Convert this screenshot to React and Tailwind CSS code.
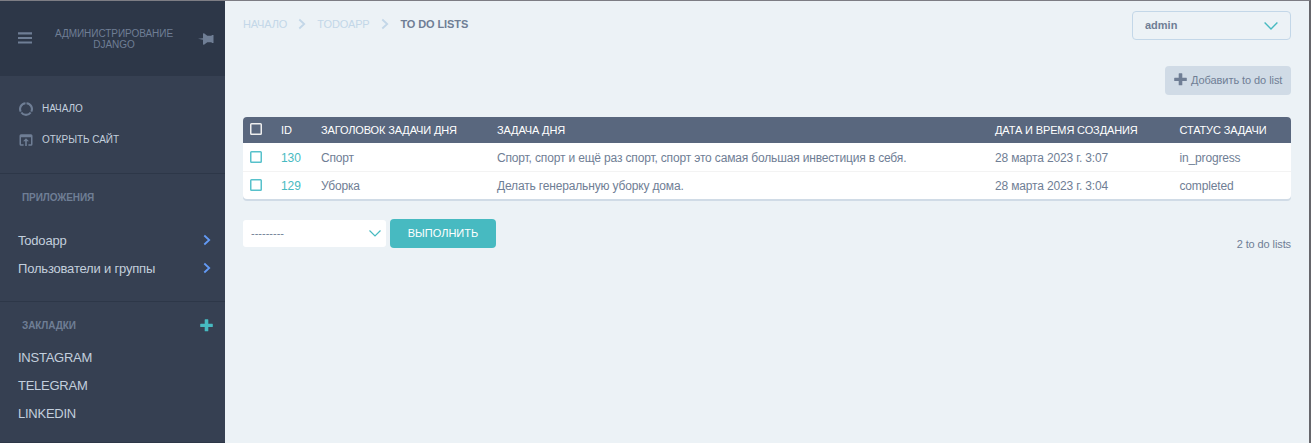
import React from "react";

const bookmarks = ["INSTAGRAM", "TELEGRAM", "LINKEDIN"];

function ChevronRight({ className }) {
  return (
    <svg viewBox="0 0 8 12" className={className} fill="none" stroke="currentColor" strokeWidth="1.8">
      <path d="M1.300 1.500 6.200 6 1.300 10.500" />
    </svg>
  );
}

function ChevronDown({ className }) {
  return (
    <svg viewBox="0 0 14 8" className={className} fill="none" stroke="currentColor" strokeWidth="1.4">
      <path d="M.6 .5 7 6.900 13.400 .5" />
    </svg>
  );
}

function Plus({ className }) {
  return (
    <svg viewBox="0 0 13 13" className={className} fill="currentColor">
      <path d="M4.700.8q0-.5.5-.5h2.600q.5 0 .5.5v3.900h4q.5 0 .5.5v2.200q0 .5-.5.5h-4v3.800q0 .5-.5.5H5.200q-.5 0-.5-.5V7.900H.7q-.5 0-.5-.5V5.200q0-.5.5-.5h4z" />
    </svg>
  );
}

function Checkbox({ className }) {
  return (
    <svg viewBox="0 0 12 12" className={"size-3 " + className} fill="none" stroke="currentColor" strokeWidth="1.5">
      <rect x=".75" y=".75" width="10.500" height="10.500" rx=".8" />
    </svg>
  );
}

function Sidebar() {
  return (
    <aside className="flex h-full w-[225px] shrink-0 flex-col bg-[#364052] text-[#c3cfdd]">
      <div className="flex h-[75px] shrink-0 items-center bg-[#2d3748] pl-[18px] text-[#6f7e95]">
        <svg viewBox="0 0 14 12" className="mb-0.5 h-3 w-3.5" fill="currentColor">
          <path d="M0 .3h14v2.100H0zM0 4.900h14v2.200H0zM0 9.500h14v2.100H0z" />
        </svg>
        <div className="ml-4 w-[132px] text-center text-[10px] leading-[11px] tracking-[-0.05px]">
          АДМИНИСТРИРОВАНИЕ
          <br />
          DJANGO
        </div>
        <svg viewBox="0 0 16 12" className="ml-[18px] mt-px h-3 w-4" fill="currentColor">
          <path d="M0 5.800 5 5.200V.9Q5 0 6 .3L9.300 2.800H13.200L14.200 2H15.500V10H14.200L13.200 9.200H9.300L6 11.700Q5 12 5 11.100V6.800z" />
        </svg>
      </div>
      <nav className="flex h-[98px] shrink-0 flex-col border-b border-[#2d3748] pt-[17px] text-[10px] tracking-[-0.05px]">
        <a className="flex h-[31px] items-center pl-[19px]">
          <svg viewBox="0 0 14 14" className="mr-[9px] size-3.5 text-[#6f7e95]" fill="none" stroke="currentColor" strokeWidth="2.1">
            <path d="M7.500 1.200A5.800 5.800 0 0 1 12.300 9.600M11.700 10.500A5.800 5.800 0 0 1 2.300 10.500M1.700 9.600A5.800 5.800 0 0 1 6.500 1.200" />
          </svg>
          <span>НАЧАЛО</span>
        </a>
        <a className="flex h-[31px] items-center pl-[19px]">
          <svg viewBox="0 0 14 14" className="mr-[9px] size-3.5 text-[#6f7e95]" fill="currentColor">
            <path d="M2 1.200h10q1.500 0 1.500 1.500v8.600q0 1.500-1.500 1.500H9.400v-1.500H12V4.200H2v7.100h2.600v1.500H2q-1.500 0-1.500-1.500V2.700Q.5 1.200 2 1.200zM7 5.200 10 8.300H7.800V12.900H6.200V8.300H4z" />
          </svg>
          <span>ОТКРЫТЬ САЙТ</span>
        </a>
      </nav>
      <section className="flex h-[128px] shrink-0 flex-col border-b border-[#2d3748] text-[13px]">
        <h2 className="mb-[5px] flex h-[47px] items-center pl-[22px] text-[10px] font-bold tracking-[-0.08px] text-[#6f7e95]">ПРИЛОЖЕНИЯ</h2>
        <a className="flex h-7 items-center justify-between pl-[18px] pr-3.5">
          <span className="pt-0.5 tracking-[-0.2px]">Todoapp</span>
          <ChevronRight className="h-3 w-2 text-[#639af5]" />
        </a>
        <a className="flex h-7 items-center justify-between pl-[18px] pr-3.5">
          <span className="pt-0.5 tracking-[-0.19px]">Пользователи и группы</span>
          <ChevronRight className="h-3 w-2 text-[#639af5]" />
        </a>
      </section>
      <section className="flex h-[141px] shrink-0 flex-col border-b border-[#2d3748] text-[13px]">
        <h2 className="flex h-[41px] items-center justify-between pl-[22px] pr-3 pt-[6px] text-[10px] font-bold tracking-[-0.08px] text-[#6f7e95]">
          <span>ЗАКЛАДКИ</span>
          <Plus className="size-[13px] text-[#47bac1]" />
        </h2>
        {bookmarks.map((name) => (
          <a key={name} className="flex h-7 items-center pl-[18px]">
            <span className="pt-0.5 tracking-[-0.25px]">{name}</span>
          </a>
        ))}
      </section>
    </aside>
  );
}

const columns = "grid grid-cols-[38px_40px_176px_498px_184.500px_1fr] items-center";

function Row({ id, title, task, date, status, className }) {
  return (
    <div className={columns + " text-[12px] tracking-[-0.16px] text-[#6f7e95] " + className}>
      <Checkbox className="ml-[7px] text-[#57c1cb]" />
      <span className="pt-px tracking-[-0.1px] text-[#47bac1]">{id}</span>
      <span className="pt-px">{title}</span>
      <span className="pt-px">{task}</span>
      <span className="pt-px">{date}</span>
      <span className="pt-px">{status}</span>
    </div>
  );
}

export default function App() {
  return (
    <div className="flex h-[443px] w-[1311px] overflow-hidden border-r-2 border-t border-r-[#66666b] border-t-[#7d7d84] bg-[#ecf2f6] font-['Liberation_Sans',Arial,sans-serif]">
      <Sidebar />
      <main className="flex w-[1066px] flex-col pl-[18px] text-[#6f7e95]">
        <header className="flex h-[39px] items-start justify-between pt-2.5">
          <div className="flex h-[26px] items-center text-[11px] text-[#c3d7e8]">
            <span className="tracking-[-0.15px]">НАЧАЛО</span>
            <ChevronRight className="ml-[11px] mr-[11px] h-3 w-2" />
            <span className="tracking-[-0.2px]">TODOAPP</span>
            <ChevronRight className="ml-[12px] mr-[11px] h-3 w-2" />
            <span className="font-bold tracking-[-0.1px] text-[#6f7e95]">TO DO LISTS</span>
          </div>
          <div className="flex h-[29px] w-[159px] shrink-0 items-center justify-between rounded-[4px] border border-[#c3d7e8] pl-3 pr-3 text-[11px] font-bold">
            <span>admin</span>
            <ChevronDown className="h-2 w-3.5 text-[#47bac1]" />
          </div>
        </header>
        <div className="mt-[26px] flex justify-end">
          <button className="flex h-[29px] w-[126px] items-center rounded-[4px] bg-[#d0dbe6] pl-[9px] text-[11px]">
            <Plus className="mb-[3px] mr-[4px] size-[13px] shrink-0" />
            <span className="whitespace-nowrap tracking-[-0.07px]">Добавить to do list</span>
          </button>
        </div>
        <div className="mt-[22px] h-[82px] w-[1048px] shrink-0 overflow-hidden rounded-[4px] bg-white shadow-[0_2px_0_0_#d0dbe6]">
          <div className={columns + " h-[26px] bg-[#59677e] text-[11px] tracking-[-0.13px] text-white"}>
            <Checkbox className="mb-0.5 ml-[7px] text-[#eeeeee]" />
            <span>ID</span>
            <span>ЗАГОЛОВОК ЗАДАЧИ ДНЯ</span>
            <span>ЗАДАЧА ДНЯ</span>
            <span>ДАТА И ВРЕМЯ СОЗДАНИЯ</span>
            <span>СТАТУС ЗАДАЧИ</span>
          </div>
          <Row id="130" title="Спорт" task="Спорт, спорт и ещё раз спорт, спорт это самая большая инвестиция в себя." date="28 марта 2023 г. 3:07" status="in_progress" className="h-[29px] border-b border-[#f3f3f3]" />
          <Row id="129" title="Уборка" task="Делать генеральную уборку дома." date="28 марта 2023 г. 3:04" status="completed" className="h-[27px] pb-px" />
        </div>
        <div className="mt-5 flex h-[50px] w-[1048px] items-start justify-between text-[11px]">
          <div className="flex items-center gap-1">
            <div className="flex h-[27px] w-[143px] items-center justify-between rounded-[3px] bg-white pl-2 pr-[5px]">
              <span>---------</span>
              <ChevronDown className="h-[7px] w-3 text-[#47bac1]" />
            </div>
            <button className="h-[29px] w-[106px] rounded-[4px] bg-[#47bac1] text-[11px] text-white">ВЫПОЛНИТЬ</button>
          </div>
          <span className="mt-[17px] tracking-[-0.1px]">2 to do lists</span>
        </div>
      </main>
    </div>
  );
}
